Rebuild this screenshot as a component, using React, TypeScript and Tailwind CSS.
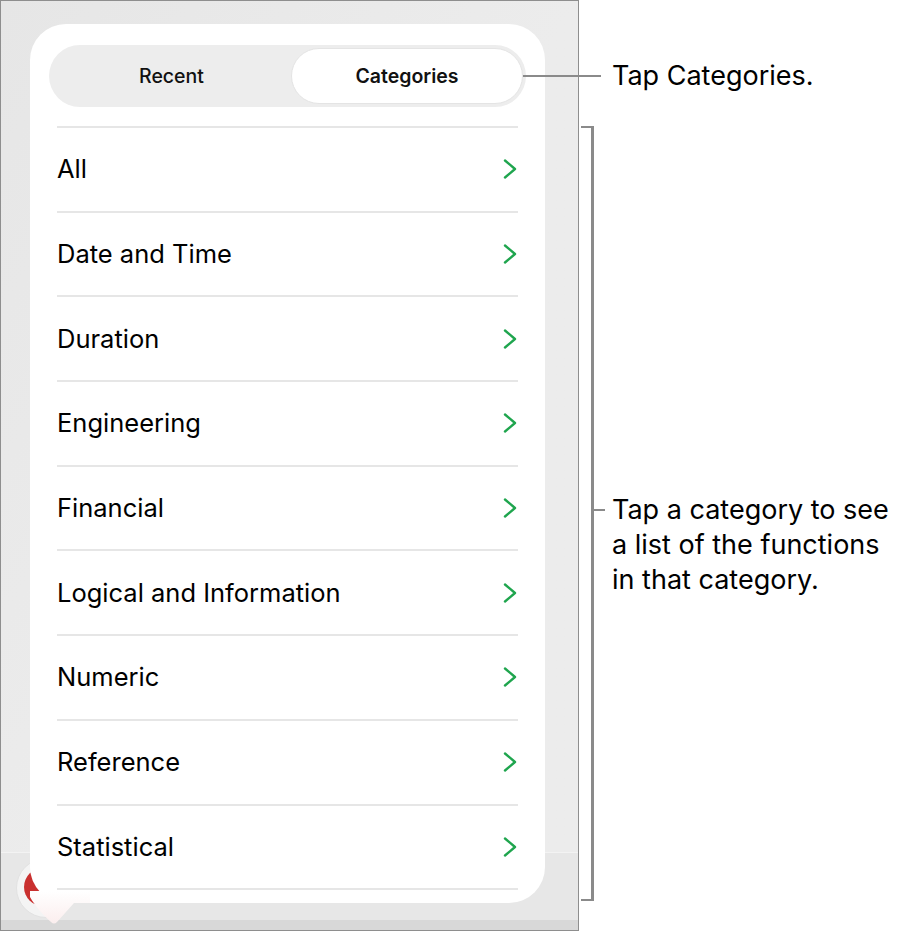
import React from "react";

const rows = [
  "All",
  "Date and Time",
  "Duration",
  "Engineering",
  "Financial",
  "Logical and Information",
  "Numeric",
  "Reference",
  "Statistical",
];

function Chevron() {
  return (
    <svg width="16" height="22" viewBox="0 0 16 22" fill="none">
      <path d="M3 2.5 L13 11 L3 19.5" stroke="#1fa54e" strokeWidth="2.4" strokeLinecap="round" strokeLinejoin="round" />
    </svg>
  );
}

export default function App() {
  return (
    <div className="relative w-[897px] h-[932px] bg-white overflow-hidden" style={{ fontFamily: "Inter, 'Noto Sans', sans-serif" }}>
      <div className="flex">
        {/* device screenshot */}
        <div className="relative w-[579px] h-[931px] border border-[#8e8e8e] bg-[#ececec] overflow-hidden">
          <div className="absolute inset-0 bg-gradient-to-br from-[#e2e2e2] via-[#ececec] to-[#ececec] opacity-60" />
          {/* bottom toolbar */}
          <div className="absolute left-0 right-0 bottom-0 h-[78px] flex flex-col">
            <div className="flex-1 bg-[#e7e7e7] border-t border-[#f3f3f3]" />
            <div className="h-[10px] bg-[#d8d8d8]" />
          </div>
          {/* red button */}
          <div className="absolute left-[15px] top-[857px] w-[60px] h-[60px] rounded-full bg-[#f4f4f4] border border-[#e2e2e2]" />
          <div className="absolute left-[23px] top-[867px] w-[38px] h-[38px] rounded-full bg-[#c9302f]" />
          {/* popover */}
          <div className="absolute left-[29px] top-[23px] w-[515px] h-[879px] bg-white rounded-[36px] flex flex-col pt-[21px]">
            <div className="mx-[19px] h-[62px] rounded-full bg-[#ededed] flex p-[3px]">
              <div className="flex-1 flex items-center justify-center pt-[2px] text-[19.5px] font-medium text-[#111]">Recent</div>
              <div className="w-[232px] rounded-full bg-white border border-[#e4e4e4] flex items-center justify-center pt-[2px] text-[19.5px] font-semibold text-[#111]">
                Categories
              </div>
            </div>
            <div className="mt-[19px] ml-[27px] mr-[27px] flex flex-col">
              <div className="h-[2px] bg-[#e6e6e6]" />
              {rows.map((r) => (
                <div key={r} className="flex flex-col">
                  <div className="h-[82.7px] flex items-center justify-between">
                    <span className="text-[25.5px] text-black">{r}</span>
                    <Chevron />
                  </div>
                  <div className="h-[2px] bg-[#e6e6e6]" />
                </div>
              ))}
            </div>
          </div>
          {/* popover tail */}
          <svg className="absolute left-[29px] top-[890px]" width="60" height="34" viewBox="0 0 60 34">
            <defs>
              <linearGradient id="tg" x1="0" y1="0" x2="0" y2="1">
                <stop offset="0" stopColor="#ffffff" />
                <stop offset="1" stopColor="#fbeeee" />
              </linearGradient>
            </defs>
            <path d="M0 0 L0 6 C5 15 14 25 21 31 C23 33 25 33 27 31 L44 12 L60 12 L60 0 Z" fill="url(#tg)" />
          </svg>
        </div>
      </div>

      {/* callout: Tap Categories */}
      <div className="absolute left-[523px] top-[75px] w-[78px] h-[2px] bg-[#8a8a8a]" />
      <div className="absolute left-[612px] top-[58px] text-[27px] leading-[35px] text-black">Tap Categories.</div>

      {/* bracket */}
      <div className="absolute left-[581px] top-[126px] w-[13px] h-[775px] border-t-[2px] border-b-[2px] border-r-[3px] border-[#8a8a8a]" />
      <div className="absolute left-[594px] top-[509px] w-[11px] h-[2px] bg-[#8a8a8a]" />
      <div className="absolute left-[612px] top-[492px] text-[27px] leading-[35px] text-black">
        <div>Tap a category to see</div>
        <div>a list of the functions</div>
        <div>in that category.</div>
      </div>
    </div>
  );
}
